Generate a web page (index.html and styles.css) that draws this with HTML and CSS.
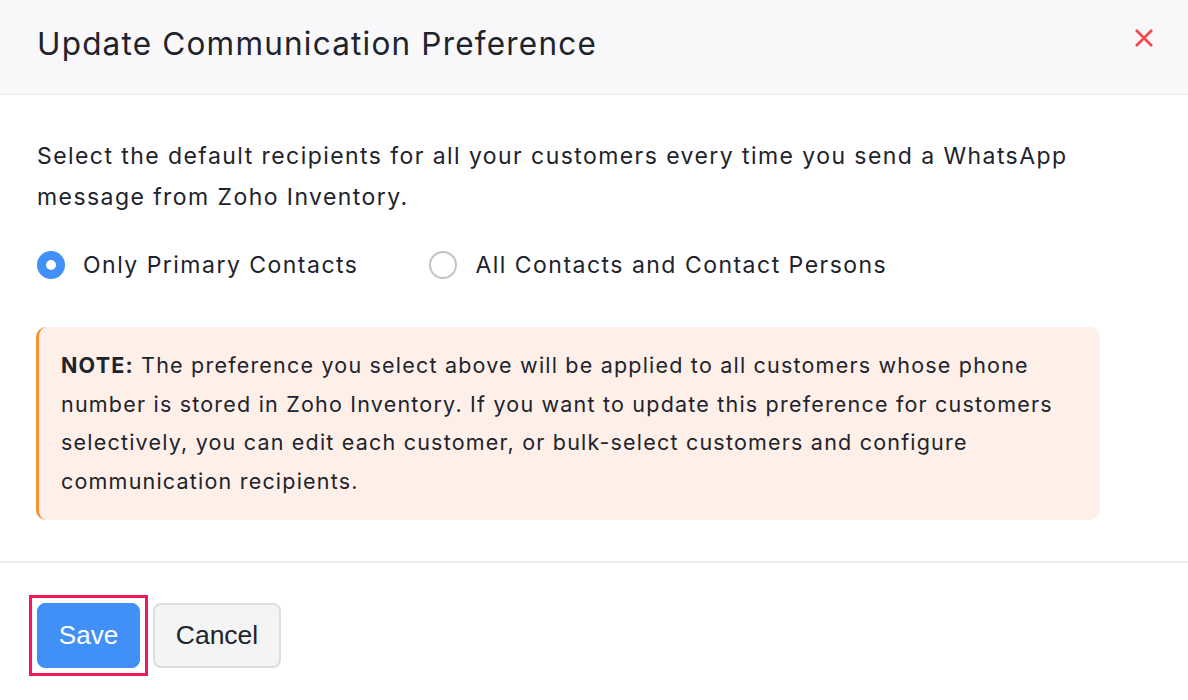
FILE: index.html
```html
<!DOCTYPE html>
<html lang="en">
<head>
<meta charset="utf-8">
<title>Update Communication Preference</title>
<link rel="stylesheet" href="styles.css">
</head>
<body>
<div class="modal">
  <header class="modal-header">
    <h1 class="modal-title">Update Communication Preference</h1>
    <button class="close-btn" aria-label="Close">
      <svg width="20" height="20" viewBox="0 0 20 20"><path d="M2 2 L18 18 M18 2 L2 18" stroke="#f04848" stroke-width="2.6" stroke-linecap="butt" fill="none"/></svg>
    </button>
  </header>
  <section class="modal-body">
    <p class="intro">Select the default recipients for all your customers every time you send a WhatsApp message from Zoho Inventory.</p>
    <div class="radio-group">
      <label class="radio">
        <span class="radio-dot checked"></span>
        <span class="radio-label">Only Primary Contacts</span>
      </label>
      <label class="radio">
        <span class="radio-dot"></span>
        <span class="radio-label">All Contacts and Contact Persons</span>
      </label>
    </div>
    <div class="note">
      <strong>NOTE:</strong> The preference you select above will be applied to all customers whose phone number is stored in Zoho Inventory. If you want to update this preference for customers selectively, you can edit each customer, or bulk-select customers and configure communication recipients.
    </div>
  </section>
  <footer class="modal-footer">
    <span class="highlight"><button class="btn btn-primary">Save</button></span>
    <button class="btn btn-secondary">Cancel</button>
  </footer>
</div>
</body>
</html>
```
FILE: styles.css
```css
* { box-sizing: border-box; }
html, body {
  margin: 0;
  padding: 0;
  background: #ffffff;
}
body {
  font-family: Inter, "Noto Sans", sans-serif;
  color: #21232c;
  width: 1188px;
  height: 700px;
  overflow: hidden;
}
.modal {
  display: flex;
  flex-direction: column;
}
.modal-header {
  height: 95px;
  background: #f8f8fb;
  border-bottom: 1px solid #e9e9ee;
  display: flex;
  align-items: center;
  justify-content: space-between;
  padding: 0 34px 0 37px;
}
.modal-title {
  margin: 0;
  font-size: 31.5px;
  font-weight: 400;
  letter-spacing: 1.2px;
  color: #21232c;
  padding-bottom: 7px;
}
.close-btn {
  border: 0;
  background: transparent;
  padding: 0;
  width: 20px;
  height: 20px;
  margin-bottom: 18px;
  cursor: pointer;
}
.close-btn svg { display: block; }
.modal-body {
  padding: 41px 37px 41px 36px;
  border-bottom: 2px solid #ebebee;
}
.intro {
  margin: 0 0 0 1px;
  font-size: 23px;
  letter-spacing: 1.43px;
  line-height: 41px;
  width: 1080px;
}
.radio-group {
  display: flex;
  align-items: center;
  gap: 71px;
  margin-top: 26px;
  padding-left: 1px;
  height: 41px;
}
.radio {
  display: flex;
  align-items: center;
  gap: 18px;
  font-size: 23px;
  letter-spacing: 1.48px;
}
.radio-dot {
  width: 28px;
  height: 28px;
  border-radius: 50%;
  border: 2px solid #c4c4c8;
  background: #fff;
  display: inline-block;
  flex: none;
}
.radio-dot.checked {
  border: 9px solid #4190f8;
  background: #fff;
}
.note {
  margin-top: 42px;
  width: 1064px;
  background: #fef0e9;
  border-left: 3px solid #f78f2e;
  border-radius: 10px;
  padding: 19px 30px 20px 22px;
  font-size: 21.5px;
  letter-spacing: 1.2px;
  line-height: 38.5px;
}
.note strong { font-weight: 700; }
.modal-footer {
  display: flex;
  align-items: center;
  gap: 5px;
  padding: 32px 0 0 29px;
}
.highlight {
  display: inline-flex;
  border: 3px solid #f2185a;
  padding: 5px;
}
.btn {
  height: 65px;
  border-radius: 8px;
  font-family: "Liberation Sans", Arial, sans-serif;
  font-size: 26px;
  cursor: pointer;
}
.btn-primary {
  width: 103px;
  background: #4190f8;
  color: #fff;
  border: 1px solid #4190f8;
}
.btn-secondary {
  width: 128px;
  background: #f4f4f4;
  color: #21232c;
  border: 2px solid #dddddd;
  font-size: 26.5px;
}
```
